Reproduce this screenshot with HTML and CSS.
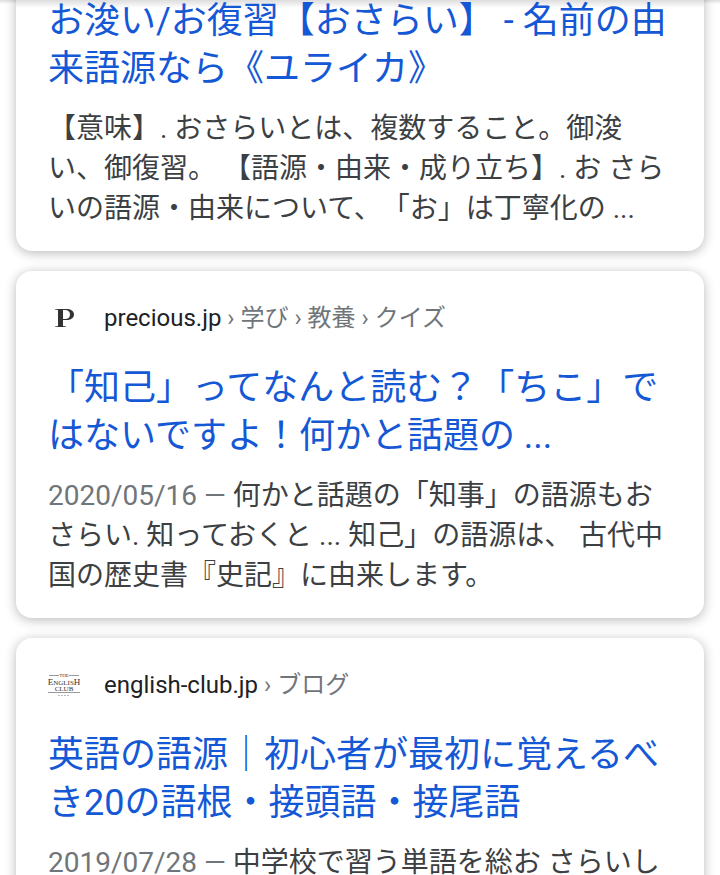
FILE: index.html
```html
<!DOCTYPE html>
<html lang="ja">

<head>
    <meta charset="UTF-8">
    <meta name="viewport" content="width=device-width, initial-scale=1.0">
    <title>語源 おさらい</title>
    <link rel="stylesheet" href="styles.css">
</head>

<body>
    <main class="results">
        <article class="card first">
            <h3 class="title"><a href="#">お浚い/お復習【おさらい】 - 名前の由来語源なら《ユライカ》</a></h3>
            <p class="snippet">【意味】. おさらいとは、複数すること。御浚い、御復習。 【語源・由来・成り立ち】. お さらいの語源・由来について、「お」は丁寧化の ...</p>
        </article>
        <article class="card">
            <div class="source">
                <svg class="favicon" viewBox="0 0 32 32" aria-hidden="true">
                    <path d="M7 7H18C23 7 26 9 26 12.5S23 18 18 18H15V24L18 24.5V25H7V24.500L10 24V8L7 7.500ZM15 8V17H17C20 17 22 15.500 22 12.500S20 8 17 8Z" fill="#333" fill-rule="evenodd" />
                </svg>
                <cite><span class="domain">precious.jp</span> › 学び › 教養 › クイズ</cite>
            </div>
            <h3 class="title"><a href="#">「知己」ってなんと読む？「ちこ」ではないですよ！何かと話題の ...</a></h3>
            <p class="snippet"><span class="date">2020/05/16 — </span>何かと話題の「知事」の語源もおさらい. 知っておくと ... 知己」の語源は、 古代中国の歴史書『史記』に由来します。</p>
        </article>
        <article class="card">
            <div class="source">
                <svg class="favicon" viewBox="0 0 32 32" aria-hidden="true">
                    <path d="M1 6.5H11M21 6.5H31M0 23.5H32" stroke="#999" />
                    <path d="M10 26.5H22" stroke="#bbb" stroke-dasharray="2 1" />
                    <text class="logo small" x="16" y="8">THE</text>
                    <text class="logo" x="16" y="16"><tspan class="cap">E</tspan>NGLIS<tspan class="cap">H</tspan></text>
                    <text class="logo" x="16" y="22">CLUB</text>
                </svg>
                <cite><span class="domain">english-club.jp</span> › ブログ</cite>
            </div>
            <h3 class="title"><a href="#">英語の語源｜初心者が最初に覚えるべき20の語根・接頭語・接尾語</a></h3>
            <p class="snippet"><span class="date">2019/07/28 — </span>中学校で習う単語を総お さらいし</p>
        </article>
    </main>
</body>

</html>
```

FILE: styles.css
```css
body {
    margin: 0;
    background-color: white;
    color: #3c4043;
    font-family: Roboto, "Noto Sans CJK JP", sans-serif;
    text-spacing-trim: space-all;
}

.results {
    display: flex;
    flex-direction: column;
    gap: 20px;
    padding: 0 16px;
    height: 100vh;
    overflow: hidden;
    box-sizing: border-box;
    background: linear-gradient(#ddd, rgba(255, 255, 255, 0) 4px);
}

.card {
    flex: none;
    padding: 24px 32px 22px;
    border-radius: 16px;
    background-color: white;
    box-shadow: 0 2px 12px rgba(0, 0, 0, 0.28);
}

/* scrolled partly under the top bar */
.first {
    margin-top: -27px;
    background-image: linear-gradient(#ddd, white 8px);
    background-position: 0 27px;
    background-repeat: no-repeat;
}

.source {
    display: flex;
    align-items: center;
    gap: 24px;
    height: 46px;
    margin-bottom: 23px;
}

.favicon {
    width: 32px;
    height: 32px;
}

.logo {
    font: 7px "Liberation Serif", serif;
    text-anchor: middle;
    fill: #333;
}

.small {
    font-size: 5px;
}

.cap {
    font-size: 9px;
}

cite {
    padding-bottom: 6px;
    color: #70757a;
    font-size: 24px;
    font-style: normal;
}

.domain {
    color: #202124;
}

.title {
    margin: 0 0 16px;
    font-size: 36px;
    font-weight: normal;
    line-height: 48px;
}

.title a {
    color: #1558d6;
    text-decoration: none;
}

.snippet {
    margin: 0;
    font-size: 28px;
    line-height: 40px;
}

.date {
    color: #70757a;
}
```
